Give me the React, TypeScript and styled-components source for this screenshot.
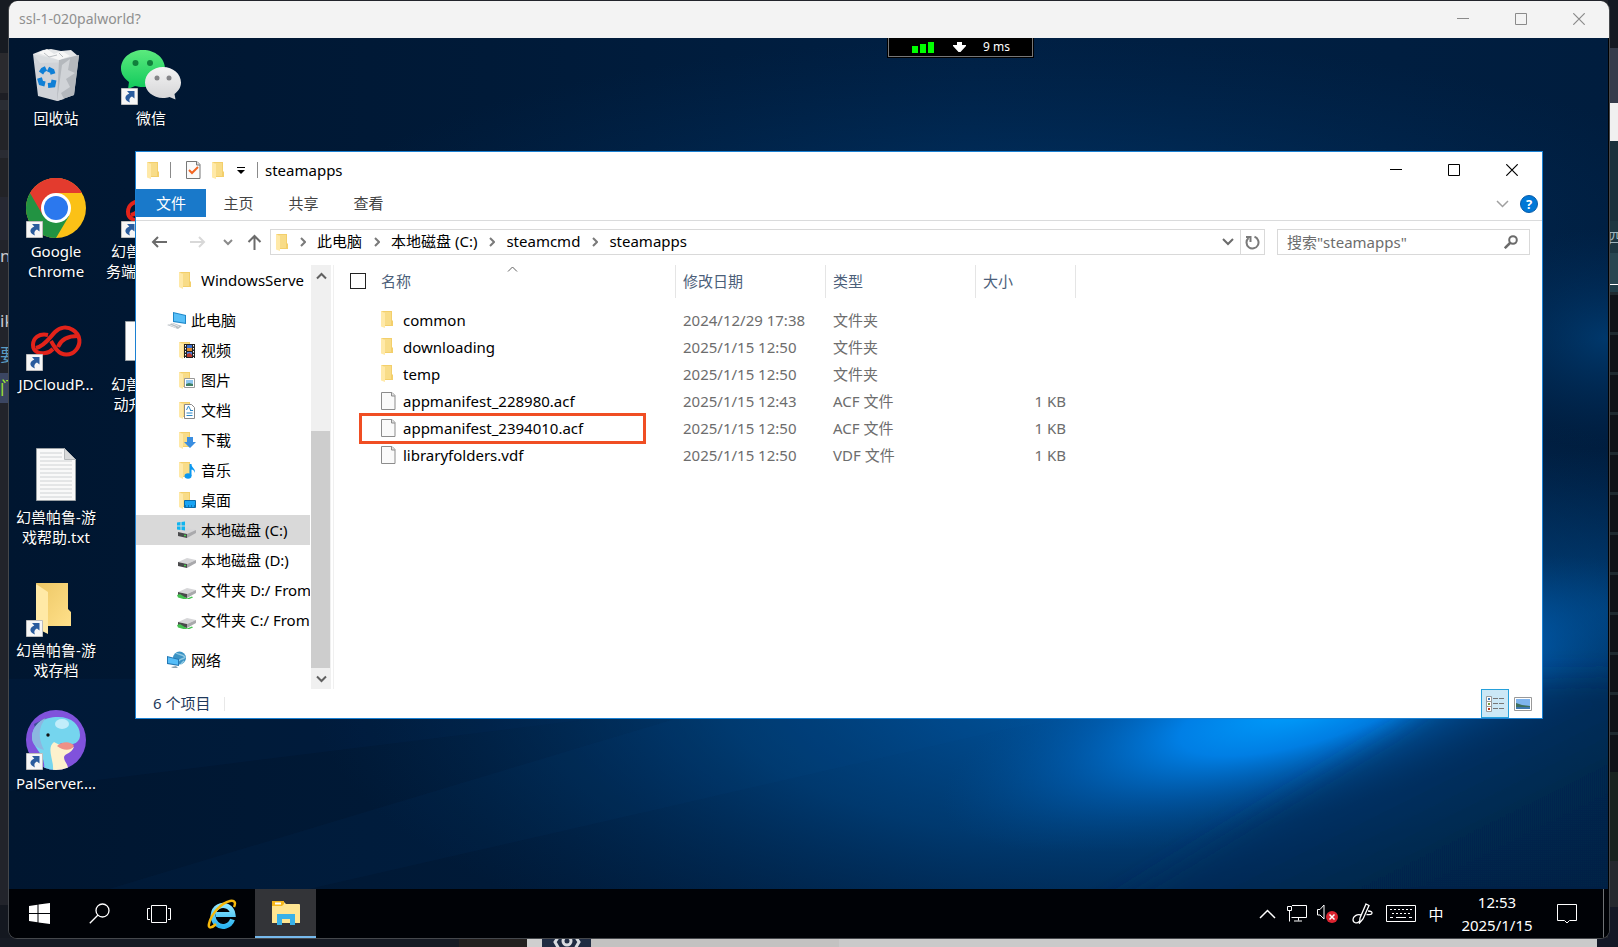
import React from "react";
import styled, { createGlobalStyle, css } from "styled-components";

const GlobalStyle = createGlobalStyle`
  * { box-sizing: border-box; }
  html, body { margin: 0; padding: 0; }
  body {
    font-family: "Noto Sans", "Noto Sans CJK SC", sans-serif;
    font-size: 15px;
    line-height: 20px;
    background: #22242b;
    overflow: hidden;
  }
  button, input { font: inherit; color: inherit; padding: 0; margin: 0; border: 0; background: none; }
  a { color: inherit; text-decoration: none; }
  svg { display: block; flex: none; }
`;

/* ---------- page and what shows behind the remote window ---------- */

const Page = styled.div`
  position: relative;
  display: flex;
  flex-direction: column;
  height: 100vh;
  padding: 0 8px 8px 8px;
  overflow: hidden;
`;

const Backdrop = styled.div`
  position: absolute;
  inset: 0;
  display: flex;
  flex-direction: column;
  background: #22242b;
`;

const BackdropSides = styled.div`
  flex: 1;
  min-height: 0;
  display: flex;
  justify-content: space-between;
`;

const Side = styled.div`
  width: 18px;
  display: flex;
  flex-direction: column;
  overflow: hidden;
`;

const Band = styled.div<{ $h?: number; $c: string; $fg?: string; $size?: number }>`
  flex: ${(p) => (p.$h ? `0 0 ${p.$h}px` : "1")};
  height: ${(p) => p.$h}px;
  line-height: ${(p) => p.$h}px;
  background: ${(p) => p.$c};
  color: ${(p) => p.$fg};
  font-size: ${(p) => p.$size ?? 17}px;
  white-space: nowrap;
  overflow: hidden;
`;

const RightSide = styled(Side)`
  width: 10px;
`;

const ServerRow = styled.div`
  flex: 0 0 40px;
  background: #0e1217;
  border-top: 3px solid #1e2a2f;
`;

const BackdropFoot = styled.div`
  display: flex;
  height: 9px;
  overflow: hidden;
`;

const FootPart = styled.div<{ $w?: number; $c: string }>`
  flex: ${(p) => (p.$w ? `0 0 ${p.$w}px` : "1")};
  background: ${(p) => p.$c};
  display: flex;
  justify-content: center;
`;

/* ---------- remote desktop window ---------- */

const Remote = styled.div`
  position: relative;
  flex: 1;
  min-height: 0;
  display: flex;
  flex-direction: column;
  margin-top: 1px;
  border: solid #45484c;
  border-width: 0 1px 1px 1px;
  border-radius: 9px;
  overflow: hidden;
  background: #000;
`;

const RemoteTitle = styled.header`
  display: flex;
  align-items: center;
  height: 37px;
  flex: none;
  padding: 0 1px 1px 10px;
  background: #f3f3f3;
  color: #8f8f8f;
`;

const RemoteName = styled.span`
  flex: 1;
  font-size: 14px;
`;

const Caption = styled.button`
  width: 58px;
  height: 35px;
  display: flex;
  align-items: center;
  justify-content: center;
`;

const Desktop = styled.main`
  position: relative;
  flex: 1;
  min-height: 0;
  margin-right: 1px;
  overflow: hidden;
`;

const Wallpaper = styled.svg`
  position: absolute;
  inset: 0;
  width: 100%;
  height: 100%;
`;

const Shortcuts = styled.div`
  position: absolute;
  top: 7px;
  left: 0;
  display: grid;
  grid-auto-flow: column;
  grid-template-rows: repeat(6, 133px);
  grid-auto-columns: 94px;
  column-gap: 1px;
`;

const Shortcut = styled.a`
  display: flex;
  flex-direction: column;
  align-items: center;
  gap: 3px;
  color: #fff;
  text-align: center;
  white-space: nowrap;
  text-shadow: 0 1px 2px rgba(0, 0, 0, 0.7);
`;

const ShortcutIcon = styled.span`
  position: relative;
  width: 60px;
  height: 60px;
`;

const ArrowBadge = styled.svg`
  position: absolute;
  left: 0;
  bottom: 0;
`;

const Line = styled.span`
  display: block;
`;

const Latency = styled.div`
  position: absolute;
  top: 0;
  right: 574px;
  width: 147px;
  height: 20px;
  display: flex;
  align-items: center;
  justify-content: space-between;
  padding: 0 23px 2px 23px;
  border: 1px solid #000;
  border-top: 0;
  background: #000;
  box-shadow: inset 1px 0 #777, inset -1px -1px #777;
  color: #fff;
  font-size: 12px;
  line-height: 16px;
`;

/* ---------- file explorer ---------- */

const Explorer = styled.section`
  position: absolute;
  top: 113px;
  left: 126px;
  right: 65px;
  border: 1px solid #1a80d2;
  background: #fff;
  color: #000;
`;

const Bar = styled.div<{ $h: number }>`
  display: flex;
  align-items: center;
  height: ${(p) => p.$h}px;
`;

const TitleRow = styled(Bar)`
  padding: 0 1px 1px 11px;
`;

const Divider = styled.i<{ $h: number; $c: string }>`
  width: 1px;
  height: ${(p) => p.$h}px;
  background: ${(p) => p.$c};
`;

const QuickAccess = styled.div`
  display: flex;
  align-items: center;
  gap: 11px;
  margin: 0 13px 0 15px;
`;

const Title = styled.h1`
  flex: 1;
  margin: 0 0 0 7px;
  font-size: 15px;
  font-weight: 400;
  line-height: 20px;
`;

const QuickDivider = styled(Divider)`
  margin: 0 4px 0 -4px;
`;

const TitleDivider = styled(Divider)`
  margin-left: 12px;
`;

const Ribbon = styled(Bar)`
  align-items: flex-start;
  border-bottom: 1px solid #dadbdc;
`;

const RibbonTab = styled.button<{ $file?: boolean }>`
  width: ${(p) => (p.$file ? 70 : 65)}px;
  height: 28px;
  color: #444;
  ${(p) =>
    p.$file &&
    css`
      background: #1979ca;
      color: #fff;
    `}
`;

const RibbonEnd = styled.div`
  display: flex;
  align-items: center;
  gap: 11px;
  height: 28px;
  margin: 1px 4px 0 auto;
`;

const Help = styled.button`
  width: 18px;
  height: 18px;
  border: 1px solid #0a5ca8;
  border-radius: 50%;
  background: #0078d7;
  color: #fff;
  font-size: 13px;
  font-weight: 700;
  line-height: 16px;
`;

const AddressRow = styled(Bar)`
  padding: 0 12px 2px 15px;
`;

const NavButtons = styled.div`
  display: flex;
  align-items: center;
  width: 119px;
`;

const NavButton = styled.button<{ $ml?: number }>`
  margin-left: ${(p) => p.$ml ?? 0}px;
`;

const Address = styled.div`
  display: flex;
  align-items: center;
  flex: 1;
  height: 26px;
  margin-right: 12px;
  padding-left: 5px;
  border: 1px solid #d9d9d9;
`;

const Crumbs = styled.nav`
  display: flex;
  align-items: center;
  flex: 1;
`;

const Crumb = styled.a`
  line-height: 22px;
  padding-bottom: 2px;
`;

const CrumbArrow = styled.span`
  width: 29px;
  display: flex;
  justify-content: center;
`;

const AddressButton = styled.button<{ $line?: boolean }>`
  width: 24px;
  height: 24px;
  display: flex;
  align-items: center;
  justify-content: center;
  border-left: ${(p) => (p.$line ? "1px solid #d9d9d9" : "0")};
`;

const Search = styled.label`
  display: flex;
  align-items: center;
  width: 253px;
  height: 26px;
  padding: 0 11px 0 9px;
  border: 1px solid #d9d9d9;
  input {
    flex: 1;
    min-width: 0;
    height: 24px;
    outline: 0;
  }
  input::placeholder { color: #6d6d6d; opacity: 1; }
`;

const Body = styled.div`
  display: flex;
  height: 424px;
`;

const Tree = styled.nav`
  width: 174px;
  display: flex;
  flex-direction: column;
  overflow: hidden;
`;

const TreeItem = styled.a<{ $root?: boolean; $on?: boolean; $gap?: boolean }>`
  display: flex;
  align-items: center;
  flex: none;
  gap: 4px;
  height: 30px;
  margin-top: ${(p) => (p.$gap ? 10 : 0)}px;
  padding-left: ${(p) => (p.$root ? 31 : 41)}px;
  background: ${(p) => (p.$on ? "#d9d9d9" : "transparent")};
  white-space: nowrap;
`;

const Scroll = styled.div`
  display: flex;
  flex-direction: column;
  width: 20px;
  margin: 0 2px 0 1px;
  background: #f0f0f0;
`;

const ScrollEnd = styled.button`
  height: 21px;
  display: flex;
  align-items: center;
  justify-content: center;
`;

const ScrollTrack = styled.div`
  flex: 1;
  display: flex;
  flex-direction: column;
  justify-content: flex-end;
`;

const Thumb = styled.div`
  height: 62%;
  margin-right: 1px;
  background: #cdcdcd;
`;

const Files = styled.div`
  flex: 1;
  border-left: 1px solid #f0f0f0;
`;

const Table = styled.table`
  width: 742px;
  table-layout: fixed;
  border-collapse: collapse;
`;

const Th = styled.th<{ $w: number }>`
  position: relative;
  width: ${(p) => p.$w}px;
  height: 42px;
  padding: 0;
  color: #4c607a;
  font-weight: 400;
  text-align: left;
  vertical-align: top;
`;

const HeadCell = styled.div`
  display: flex;
  align-items: center;
  gap: 15px;
  height: 33px;
  padding: 0 0 2px 7px;
  border-right: 1px solid #e5e5e5;
`;

const NameHead = styled(HeadCell)`
  padding-left: 16px;
`;

const Check = styled.input`
  appearance: none;
  width: 16px;
  height: 16px;
  border: 1px solid #222;
  background: #fff;
`;

const SortMark = styled.svg`
  position: absolute;
  top: 1px;
  left: 173px;
`;

const Td = styled.td<{ $right?: boolean }>`
  position: relative;
  height: 27px;
  padding: 0 10px 2px 7px;
  color: #6d6d6d;
  text-align: ${(p) => (p.$right ? "right" : "left")};
  white-space: nowrap;
`;

const NameTd = styled(Td)`
  padding-left: 47px;
  color: #000;
`;

const FileName = styled.span`
  display: flex;
  align-items: center;
`;

const FileIcon = styled.span`
  width: 22px;
`;

const Highlight = styled.span`
  position: absolute;
  top: -2px;
  left: 25px;
  width: 287px;
  height: 31px;
  border: 3px solid #f04e23;
`;

const Status = styled(Bar)`
  padding-left: 17px;
  color: #1e395b;
`;

const StatusText = styled.span`
  padding: 0 14px 2px 0;
`;

const Views = styled.div`
  display: flex;
  margin: 0 5px 0 auto;
`;

const ViewButton = styled.button<{ $on?: boolean }>`
  width: 28px;
  height: 29px;
  display: flex;
  align-items: center;
  justify-content: center;
  border: ${(p) => (p.$on ? "1px solid #26a0da" : "0")};
  background: ${(p) => (p.$on ? "#cbe8f6" : "transparent")};
`;

/* ---------- taskbar ---------- */

const Taskbar = styled.footer`
  display: flex;
  align-items: center;
  flex: none;
  height: 49px;
  background: #000206;
  color: #fff;
`;

const TaskButton = styled.button<{ $on?: boolean; $w?: number }>`
  width: ${(p) => p.$w ?? 60}px;
  height: 49px;
  display: flex;
  align-items: center;
  justify-content: center;
  ${(p) =>
    p.$on &&
    css`
      background: #333438;
      border-bottom: 2px solid #76b9ed;
    `}
`;

const Tray = styled.div`
  display: flex;
  align-items: center;
  margin-left: auto;
  height: 49px;
`;

const TrayButton = styled.button<{ $w: number }>`
  width: ${(p) => p.$w}px;
  height: 49px;
  display: flex;
  align-items: center;
  justify-content: center;
`;

const Clock = styled.time`
  width: 88px;
  text-align: center;
  line-height: 23px;
`;

const ShowDesktop = styled.button`
  width: 6px;
  height: 49px;
  margin-left: 10px;
  border-left: 1px solid #6f7275;
`;

/* ---------- drawings ---------- */

const Folder = () => (
  <svg width="12" height="17" viewBox="0 0 12 17">
    <path d="M0 0h11v9l1 1v5H3z" fill="#f3cf6b" />
    <path d="M3 1h7v13H3z" fill="#f8dc88" />
    <path d="M0 0l4 2v15L0 15.500z" fill="#ffe9a8" />
  </svg>
);

const Doc = () => (
  <svg width="15" height="18" viewBox="0 0 15 18">
    <path d="M.5.500h10.500l3 3v14H.5z" fill="#fafafa" stroke="#8c8c8c" />
    <path d="M10.500.500v3.500h3.500" fill="#e0e0e0" stroke="#8c8c8c" />
  </svg>
);

const CheckDoc = () => (
  <svg width="15" height="18" viewBox="0 0 15 18">
    <path d="M.5.500h10.500l3 3v14H.5z" fill="#fafafa" stroke="#777" />
    <path d="M10.500.500v3.500h3.500" fill="#ddd" stroke="#777" />
    <path d="M3 9l3 3 6-6" fill="none" stroke="#f26522" strokeWidth="2" />
  </svg>
);

const TreeFolder = ({ kind }: { kind?: string }) => (
  <svg width="20" height="18" viewBox="0 0 20 18">
    <g transform="translate(2 0)">
      <path d="M0 1h11v9l1 1v5H3z" fill="#f3cf6b" />
      <path d="M3 2h7v13H3z" fill="#f8dc88" />
      <path d="M0 1l4 2v15L0 16z" fill="#ffe9a8" />
    </g>
    {kind === "video" && (
      <g>
        <path d="M7 3h11v14H7z" fill="#222" />
        <path d="M10 4h5v6h-5z" fill="#3a6fd0" />
        <path d="M10 7h5v3h-5z" fill="#e08a2c" />
        <path d="M10 11h5v5h-5z" fill="#4a7fe0" />
        <path d="M10 13l3-1 2 2v2h-5z" fill="#b83a2e" />
        <path d="M8.500 4v13M16.500 4v13" stroke="#fff" strokeDasharray="1.500 1.500" />
      </g>
    )}
    {kind === "picture" && (
      <g>
        <path d="M7.500 7.500h10v9h-10z" fill="#fff" stroke="#999" />
        <path d="M9 9h7v6H9z" fill="#8fc7f0" />
        <path d="M9 13l3-1 4 1v2H9z" fill="#3f7f63" />
      </g>
    )}
    {kind === "document" && (
      <g>
        <path d="M7.500 3.500h7l3 3v11h-10z" fill="#fff" stroke="#888" />
        <path d="M9.500 9l2-4 2 4M13 9.500h3M9.500 12h6M9.500 14.500h6" fill="none" stroke="#2b88c8" />
      </g>
    )}
    {kind === "download" && <path d="M10 6h6v5h3l-6 6-6-6h3z" fill="#3a8ee0" />}
    {kind === "music" && (
      <g fill="#0c98f0">
        <ellipse cx="11" cy="15" rx="3.500" ry="2.700" />
        <path d="M12.500 3h2c0 4 4 4 3.500 9-1-3-2-3-3.500-3.500V15h-2z" />
      </g>
    )}
    {kind === "desktop" && (
      <g>
        <path d="M7.500 9.500h11v7h-11z" fill="#18a4f4" stroke="#0d6ba8" />
        <path d="M8 15h10" stroke="#074a7a" strokeDasharray="1 2" />
      </g>
    )}
  </svg>
);

const Drive = ({ kind }: { kind?: string }) => (
  <svg width="20" height="18" viewBox="0 0 20 18">
    <path d="M1 11l9-4 9 2-9 4z" fill="#d6d6d8" />
    <path d="M1 11l9 2v4l-9-2z" fill="#4a4a4c" />
    <path d="M10 13l9-4v3l-9 5z" fill="#a9a9ac" />
    {kind !== "net" && <path d="M7 14.500h2" stroke="#45d04a" strokeWidth="1.500" />}
    {kind === "win" && (
      <path d="M0 1.500l3.500-.5v3.500H0zM4.500 1L8 .500v4H4.500zM0 5.500h3.500V9L0 8.500zM4.500 5.500H8v4L4.500 9z" fill="#10b4ef" />
    )}
    {kind === "net" && <path d="M0 14l3-1 7 4.500 5-2 1 1-6 2.500-9-2.500z" fill="#43c24f" />}
  </svg>
);

const Computer = () => (
  <svg width="20" height="18" viewBox="0 0 20 18">
    <path d="M6 1l13 3v9L6 11z" fill="#1e87c8" />
    <path d="M7 2.300l11 2.500v7L7 10z" fill="#57bff8" />
    <path d="M0 14l6-2 9 3-4 3z" fill="#b9bfc4" />
    <path d="M2 13.500l7 3M5 12.500l7 3" stroke="#e8eaec" />
  </svg>
);

const Network = () => (
  <svg width="20" height="18" viewBox="0 0 20 18">
    <circle cx="12.500" cy="7" r="6.500" fill="#3b93c4" />
    <path d="M9 2c3 2 7 1 9 4-2 3-5 1-6 4M14 13l3-3" fill="none" stroke="#8fc8e2" strokeWidth="1.500" />
    <path d="M0 5l12 3v7L0 13z" fill="#2478b4" />
    <path d="M1 6.300l10 2.500v5L1 12z" fill="#55bdf8" />
    <path d="M4 16l5-1 2 2H6z" fill="#8aa0ae" />
  </svg>
);

const Chevron = ({ d, w, h, c, s = 2 }: { d: string; w: number; h: number; c: string; s?: number }) => (
  <svg width={w} height={h} viewBox={`0 0 ${w} ${h}`} fill="none" stroke={c} strokeWidth={s}>
    <path d={d} />
  </svg>
);

const CaptionIcon = ({ kind, c }: { kind: string; c: string }) => (
  <svg width="12" height="12" viewBox="0 0 12 12" fill="none" stroke={c}>
    {kind === "min" && <path d="M0 5.500h12" />}
    {kind === "max" && <path d="M.5.500h11v11H.5z" />}
    {kind === "close" && <path d="M.3.300l11.400 11.400M11.700.300L.3 11.700" strokeWidth="1.200" />}
  </svg>
);

const Captions = ({ c }: { c: string }) => (
  <>
    <Caption aria-label="最小化"><CaptionIcon kind="min" c={c} /></Caption>
    <Caption aria-label="最大化"><CaptionIcon kind="max" c={c} /></Caption>
    <Caption aria-label="关闭"><CaptionIcon kind="close" c={c} /></Caption>
  </>
);

const Badge = () => (
  <ArrowBadge width="17" height="17" viewBox="0 0 17 17">
    <path d="M.5.500h16v16H.5z" fill="#f6f6f6" stroke="#bdbdbd" />
    <path d="M6 3h7.500v7.500L11 8.500C8 10 8 12 9 14.500 3 12 3 8 8.300 5.500z" fill="#2a5c9e" />
  </ArrowBadge>
);

const BigIcon = ({ kind }: { kind: string }) => (
  <svg width="60" height="60" viewBox="0 0 60 60">
    {kind === "bin" && (
      <g>
        <path d="M7 9l10-4 8-1 10 2 10-1 7 6-4 6-34 1z" fill="#e4e6e8" />
        <path d="M7 9l26 6 20-5-5 40-17 6-19-5z" fill="#d9dcdf" opacity=".96" />
        <path d="M33 15l20-5-5 40-17 6z" fill="#b4b8bd" />
        <path d="M36 20l8-6-2 11 7 3-9 6 4 8-9 6 3 6-7 2z" fill="#d0d3d7" />
        <path d="M12 8l9-4 7 5 8-3 8 5-11 4z" fill="#f7f7f7" />
        <path d="M18 8l5 4 8-2M33 8l4 4" fill="none" stroke="#babec2" />
        <g fill="none" stroke="#0f7fd6" strokeWidth="5">
          <path d="M15 28l2-3 3-1.500" />
          <path d="M22 24l4 2 1 3" />
          <path d="M28 35l-1 5-5 .5" />
          <path d="M19 39l-4-1-1.500-5" />
        </g>
      </g>
    )}
    {kind === "wechat" && (
      <g>
        <defs>
          <linearGradient id="wc" x1="0" y1="0" x2="0" y2="1">
            <stop offset="0" stopColor="#5bea7d" />
            <stop offset="1" stopColor="#10c95c" />
          </linearGradient>
          <linearGradient id="wg" x1="0" y1="0" x2="0" y2="1">
            <stop offset="0" stopColor="#f4f4f4" />
            <stop offset="1" stopColor="#d4d4d6" />
          </linearGradient>
        </defs>
        <path d="M22 5c12 0 22 8 22 18.500S34 42 22 42c-3 0-6-.5-8-1l-7 3 1-7C3 33 0 29 0 23.500 0 13 10 5 22 5z" fill="url(#wc)" />
        <circle cx="14.500" cy="18" r="3" fill="#11803c" />
        <circle cx="29" cy="18" r="3" fill="#11803c" />
        <path d="M42 22c10 0 18 7 18 15.500 0 5-3 9-6.500 11.500l1 5.500-6-2.500c-2 .6-4 1-6.500 1-10 0-18-7-18-15.500S32 22 42 22z" fill="url(#wg)" />
        <circle cx="36" cy="33" r="2.500" fill="#858588" />
        <circle cx="48" cy="33" r="2.500" fill="#858588" />
      </g>
    )}
    {kind === "chrome" && (
      <g>
        <circle cx="30" cy="30" r="30" fill="#fbc116" />
        <path d="M30 30L4 15a30 30 0 0 0 26 45l13-22z" fill="#229342" />
        <path d="M30 15h26L43 38z" fill="#fbc116" />
        <path d="M4 15A30 30 0 0 1 56 15H30L17 37.500z" fill="#e33b2e" />
        <circle cx="30" cy="30" r="15" fill="#fff" />
        <circle cx="30" cy="30" r="12" fill="#2b78ee" />
      </g>
    )}
    {kind === "jd" && (
      <g fill="none" stroke="#e2231a" strokeWidth="4">
        <path d="M22 24C13 22 7 27 7 34c0 6 5 9 12 8 3 0 6-2 8-4" />
        <path d="M10 37c9-2 14-11 19-16 5-5 12-6 18-2 8 5 8 14 3 20-5 6-14 6-19 0-3-3-4-6-6-9" />
        <path d="M52 25c-10 0-17 3-20 11" />
      </g>
    )}
    {kind === "text" && (
      <g>
        <path d="M10.500 4.500h28l11 11v41h-39z" fill="#f9f9f9" stroke="#9aa0a4" />
        <path d="M38.500 4.500v11h11z" fill="#d9dadb" stroke="#b5b8ba" />
        <path d="M14 9h22M14 13h22M14 17h32M14 21h32M14 25h32M14 29h32M14 33h32M14 37h32M14 41h32M14 45h32M14 49h32M14 53h32" stroke="#cfd2d4" />
      </g>
    )}
    {kind === "page" && <path d="M4.500 10.500h50v39h-50z" fill="#fdfdfd" stroke="#9aa0a4" />}
    {kind === "folder" && (
      <g>
        <defs>
          <linearGradient id="fd" x1="0" y1="0" x2="1" y2="1">
            <stop offset="0" stopColor="#edc765" />
            <stop offset="1" stopColor="#ffe08a" />
          </linearGradient>
        </defs>
        <path d="M10 6h32v26l3 3v14H16z" fill="url(#fd)" />
        <path d="M10 7l12 8v42l-12-6z" fill="#ffe9a6" />
      </g>
    )}
    {kind === "pal" && (
      <g>
        <clipPath id="pc"><circle cx="30" cy="30" r="30" /></clipPath>
        <g clipPath="url(#pc)">
          <path d="M0 0h60v60H0z" fill="#8052dc" />
          <path d="M8 14l8 30 4 16h12L20 8z" fill="#3c4f94" />
          <path d="M6 28C6 14 18 7 32 7c14 0 22 8 22 18 0 5-3 8-7 9l-12-1-7 9 2 18H18C20 44 8 40 6 28z" fill="#75d5ee" />
          <path d="M6 28C6 18 12 11 20 8c-8 9-8 20-2 32C11 38 6 34 6 28z" fill="#8cb6e0" />
          <path d="M27 60c1-10-7-22 1-28 8 4 14 7 20 5-3 7-9 6-10 10 0 5 5 8 4 13z" fill="#fdf1cd" />
          <path d="M31 36c4-4 13-6 17 0-4 6-12 4-17 0z" fill="#f09086" />
          <ellipse cx="36" cy="14" rx="7" ry="5" fill="#c1edfa" />
          <circle cx="22" cy="25" r="1.700" fill="#111" />
        </g>
      </g>
    )}
  </svg>
);

const WindowsLogo = () => (
  <svg width="21" height="21" viewBox="0 0 21 21" fill="#fff">
    <path d="M0 3l8.500-1.200V10H0zM9.500 1.600L21 0v10H9.500zM0 11h8.500v8.200L0 18zM9.500 11H21v10L9.500 19.400z" />
  </svg>
);

const IeLogo = () => (
  <svg width="30" height="30" viewBox="0 0 30 30" fill="none">
    <defs>
      <linearGradient id="ie" x1="0" y1="0" x2="0" y2="1">
        <stop offset="0" stopColor="#8fe6ff" />
        <stop offset="1" stopColor="#2bb4f0" />
      </linearGradient>
    </defs>
    <path d="M25.500 20.500A10 10.500 0 1 1 26 15.500H9" stroke="url(#ie)" strokeWidth="5" />
    <path d="M9 25c-4 4-8 5-7 0C4 15 14 4 23 2c5-1 6 2 4 6" stroke="#f7b90b" strokeWidth="2.500" />
  </svg>
);

const ExplorerLogo = () => (
  <svg width="28" height="24" viewBox="0 0 28 24">
    <path d="M0 1h12l2 2h13a1 1 0 0 1 1 1v18H0z" fill="#ffe591" />
    <path d="M0 0h12v3l-2 2H0z" fill="#f6b81c" />
    <path d="M3 1.500h6v2H3z" fill="#fff" />
    <path d="M5 13h18v11h-5v-6h-8v6H5z" fill="#38b1e8" />
  </svg>
);

const WallpaperArt = () => (
  <Wallpaper viewBox="0 0 1600 850" preserveAspectRatio="none" aria-hidden>
    <defs>
      <linearGradient id="base" x1="0" y1="0" x2="1" y2="0">
        <stop offset="0" stopColor="#001630" />
        <stop offset=".3" stopColor="#001a38" />
        <stop offset=".6" stopColor="#002044" />
        <stop offset="1" stopColor="#001d3e" />
      </linearGradient>
      <radialGradient id="upper">
        <stop offset="0" stopColor="#004a8c" stopOpacity=".5" />
        <stop offset="1" stopColor="#003468" stopOpacity="0" />
      </radialGradient>
      <radialGradient id="lower">
        <stop offset="0" stopColor="#0062b8" stopOpacity=".85" />
        <stop offset=".5" stopColor="#004a8c" stopOpacity=".6" />
        <stop offset="1" stopColor="#003060" stopOpacity="0" />
      </radialGradient>
      <radialGradient id="glow">
        <stop offset="0" stopColor="#00a2ff" />
        <stop offset=".35" stopColor="#0088f4" stopOpacity=".85" />
        <stop offset=".65" stopColor="#0068c4" stopOpacity=".45" />
        <stop offset="1" stopColor="#004c90" stopOpacity="0" />
      </radialGradient>
      <radialGradient id="side">
        <stop offset="0" stopColor="#004a8a" stopOpacity=".6" />
        <stop offset="1" stopColor="#003468" stopOpacity="0" />
      </radialGradient>
      <linearGradient id="shade" gradientUnits="userSpaceOnUse" x1="1280" y1="730" x2="1340" y2="850">
        <stop offset="0" stopColor="#003264" stopOpacity=".35" />
        <stop offset=".5" stopColor="#002a54" stopOpacity=".6" />
        <stop offset="1" stopColor="#002246" stopOpacity=".6" />
      </linearGradient>
      <filter id="soft" x="-20%" y="-20%" width="140%" height="140%">
        <feGaussianBlur stdDeviation="12" />
      </filter>
    </defs>
    <path d="M0 0h1600v850H0z" fill="url(#base)" />
    <ellipse cx="1020" cy="190" rx="720" ry="190" fill="url(#upper)" />
    <ellipse cx="1600" cy="300" rx="170" ry="110" fill="url(#side)" />
    <ellipse cx="1600" cy="570" rx="230" ry="160" fill="url(#side)" />
    <ellipse cx="1120" cy="650" rx="820" ry="310" fill="url(#lower)" />
    <ellipse cx="1300" cy="665" rx="380" ry="110" fill="url(#glow)" transform="rotate(-16 1300 665)" />
    <path d="M1460 640L1390 690 1250 775 1080 880H1640V640z" fill="url(#shade)" filter="url(#soft)" />
    <path d="M0 752L600 678 800 640H0z" fill="#00356a" opacity=".12" />
    <path d="M300 850L1000 690 1300 640H800L100 850z" fill="#0060b0" opacity=".05" />
  </Wallpaper>
);

/* ---------- data ---------- */

const shortcuts = [
  { icon: "bin", lines: ["回收站"], badge: false },
  { icon: "chrome", lines: ["Google", "Chrome"], badge: true },
  { icon: "jd", lines: ["JDCloudP..."], badge: true },
  { icon: "text", lines: ["幻兽帕鲁-游", "戏帮助.txt"], badge: false },
  { icon: "folder", lines: ["幻兽帕鲁-游", "戏存档"], badge: true },
  { icon: "pal", lines: ["PalServer...."], badge: true },
  { icon: "wechat", lines: ["微信"], badge: true },
  { icon: "jd", lines: ["幻兽帕鲁-服", "务端启动程序"], badge: true },
  { icon: "page", lines: ["幻兽帕鲁-自", "动升级程序"], badge: false },
];

const tree = [
  { name: "WindowsServe", icon: <TreeFolder /> },
  { name: "此电脑", icon: <Computer />, root: true, gap: true },
  { name: "视频", icon: <TreeFolder kind="video" /> },
  { name: "图片", icon: <TreeFolder kind="picture" /> },
  { name: "文档", icon: <TreeFolder kind="document" /> },
  { name: "下载", icon: <TreeFolder kind="download" /> },
  { name: "音乐", icon: <TreeFolder kind="music" /> },
  { name: "桌面", icon: <TreeFolder kind="desktop" /> },
  { name: "本地磁盘 (C:)", icon: <Drive kind="win" />, on: true },
  { name: "本地磁盘 (D:)", icon: <Drive /> },
  { name: "文件夹 D:/ From", icon: <Drive kind="net" /> },
  { name: "文件夹 C:/ From", icon: <Drive kind="net" /> },
  { name: "网络", icon: <Network />, root: true, gap: true },
];

const files = [
  { name: "common", date: "2024/12/29 17:38", type: "文件夹", size: "" },
  { name: "downloading", date: "2025/1/15 12:50", type: "文件夹", size: "" },
  { name: "temp", date: "2025/1/15 12:50", type: "文件夹", size: "" },
  { name: "appmanifest_228980.acf", date: "2025/1/15 12:43", type: "ACF 文件", size: "1 KB" },
  { name: "appmanifest_2394010.acf", date: "2025/1/15 12:50", type: "ACF 文件", size: "1 KB", marked: true },
  { name: "libraryfolders.vdf", date: "2025/1/15 12:50", type: "VDF 文件", size: "1 KB" },
];

const crumbs = ["此电脑", "本地磁盘 (C:)", "steamcmd", "steamapps"];

export default function App() {
  return (
    <Page>
      <GlobalStyle />
      <Backdrop aria-hidden>
        <BackdropSides>
          <Side>
            <Band $h={53} $c="#171b22" />
            <Band $h={40} $c="#2a2a2e" />
            <Band $h={7} $c="#1d1e24" />
            <Band $h={10} $c="#2a2d34" />
            <Band $h={40} $c="#232428" />
            <Band $h={8} $c="#2a2c33" />
            <Band $h={39} $c="#222327" />
            <Band $h={43} $c="#262832" />
            <Band $h={32} $c="#22242b" $fg="#c8cad0">ns</Band>
            <Band $h={33} $c="#22242b" />
            <Band $h={32} $c="#22242b" $fg="#c8cad0">ik</Band>
            <Band $h={36} $c="#22242b" $fg="#5a9cc4">要</Band>
            <Band $h={30} $c="#3b4662" $fg="#a0e830">门</Band>
            <Band $h={502} $c="#22242b" />
            <Band $c="#141820" />
          </Side>
          <RightSide>
            <Band $h={48} $c="#141923" />
            <Band $h={55} $c="#343b4b" />
            <Band $h={38} $c="#f0f0f0" />
            <Band $h={80} $c="#1a303c" />
            <Band $h={32} $c="#1d3641" $fg="#9fb4bc" $size={15}>四</Band>
            <Band $h={31} $c="#284651" />
            <Band $h={1} $c="#fff" />
            <Band $h={7} $c="#1f3d48" />
            {Array.from({ length: 12 }, (_, i) => (
              <ServerRow key={i} />
            ))}
            <Band $h={89} $c="#18231f" />
            <Band $h={46} $c="#25282e" />
            <Band $c="#141826" />
          </RightSide>
        </BackdropSides>
        <BackdropFoot>
          <FootPart $w={459} $c="#171b24" />
          <FootPart $w={68} $c="#242120" />
          <FootPart $w={15} $c="#cfcfcf" />
          <FootPart $w={49} $c="#202c42">
            <svg width="28" height="9" viewBox="0 0 28 9" fill="none" stroke="#d8dbe0" strokeWidth="3">
              <path d="M6-2L2 4l4 7M22-2l4 6-4 7" />
              <circle cx="14" cy="3" r="4" />
            </svg>
          </FootPart>
          <FootPart $w={248} $c="#c3c2c1" />
          <FootPart $c="#cacaca" />
          <FootPart $w={21} $c="#141826" />
        </BackdropFoot>
      </Backdrop>

      <Remote>
        <RemoteTitle>
          <RemoteName>ssl-1-020palworld?</RemoteName>
          <Captions c="#8a8a8a" />
        </RemoteTitle>

        <Desktop>
          <WallpaperArt />
          <Shortcuts>
            {shortcuts.map((s, i) => (
              <Shortcut key={i} href="#">
                <ShortcutIcon>
                  <BigIcon kind={s.icon} />
                  {s.badge && <Badge />}
                </ShortcutIcon>
                <span>
                  {s.lines.map((l) => (
                    <Line key={l}>{l}</Line>
                  ))}
                </span>
              </Shortcut>
            ))}
          </Shortcuts>

          <Latency>
            <svg width="24" height="12" viewBox="0 0 24 12" fill="#00ff00">
              <path d="M1 5h6v7H1zM9 3h6v9H9zM17 1h6v11h-6z" />
            </svg>
            <svg width="13" height="10" viewBox="0 0 13 10" fill="#fff">
              <path d="M4 0h5v3h4v1L7.500 10h-2L0 4V3h4z" />
            </svg>
            <span>9 ms</span>
          </Latency>

          <Explorer>
            <TitleRow $h={37}>
              <Folder />
              <QuickAccess>
                <QuickDivider $h={16} $c="#8a8a8a" />
                <CheckDoc />
                <Folder />
              </QuickAccess>
              <svg width="8" height="7" viewBox="0 0 8 7">
                <path d="M0 .500h8" stroke="#000" />
                <path d="M0 3h8L4 7z" />
              </svg>
              <TitleDivider $h={16} $c="#8a8a8a" />
              <Title>steamapps</Title>
              <Captions c="#000" />
            </TitleRow>

            <Ribbon $h={32}>
              <RibbonTab $file>文件</RibbonTab>
              <RibbonTab>主页</RibbonTab>
              <RibbonTab>共享</RibbonTab>
              <RibbonTab>查看</RibbonTab>
              <RibbonEnd>
                <Chevron w={13} h={8} c="#a0a0a0" s={1.5} d="M1 1l5.500 5.500L12 1" />
                <Help>?</Help>
              </RibbonEnd>
            </Ribbon>

            <AddressRow $h={44}>
              <NavButtons>
                <NavButton aria-label="后退">
                  <Chevron w={16} h={12} c="#6b6b6b" d="M16 6H2M7 1L2 6l5 5" />
                </NavButton>
                <NavButton aria-label="前进" $ml={23}>
                  <Chevron w={16} h={12} c="#d8d8d8" d="M0 6h14M9 1l5 5-5 5" />
                </NavButton>
                <NavButton aria-label="最近浏览的位置" $ml={17}>
                  <Chevron w={10} h={7} c="#8a8a8a" d="M1 1l4 4 4-4" />
                </NavButton>
                <NavButton aria-label="上移" $ml={14}>
                  <Chevron w={15} h={16} c="#6b6b6b" d="M7.500 16V2M1.500 8l6-6 6 6" />
                </NavButton>
              </NavButtons>
              <Address>
                <Folder />
                <Crumbs>
                  {crumbs.map((c) => (
                    <React.Fragment key={c}>
                      <CrumbArrow>
                        <Chevron w={6} h={10} c="#7a7a7a" d="M1 1l4 4-4 4" />
                      </CrumbArrow>
                      <Crumb href="#">{c}</Crumb>
                    </React.Fragment>
                  ))}
                </Crumbs>
                <AddressButton aria-label="展开">
                  <Chevron w={12} h={8} c="#6b6b6b" d="M1 1l5 5 5-5" />
                </AddressButton>
                <AddressButton aria-label="刷新" $line>
                  <Chevron w={15} h={15} c="#7a7a7a" d="M9.500 1.800A6 6 0 1 1 3.500 3M1 2h4.500v5" />
                </AddressButton>
              </Address>
              <Search>
                <input type="text" aria-label="搜索" placeholder={'搜索"steamapps"'} />
                <svg width="14" height="14" viewBox="0 0 14 14" fill="none" stroke="#6b6b6b" strokeWidth="2">
                  <circle cx="9" cy="5" r="3.800" />
                  <path d="M6.500 7.500L.8 13.200" strokeWidth="2.500" />
                </svg>
              </Search>
            </AddressRow>

            <Body>
              <Tree>
                {tree.map((t) => (
                  <TreeItem key={t.name} href="#" $root={t.root} $on={t.on} $gap={t.gap}>
                    {t.icon}
                    {t.name}
                  </TreeItem>
                ))}
              </Tree>
              <Scroll>
                <ScrollEnd aria-label="向上滚动">
                  <Chevron w={11} h={8} c="#606060" d="M1 6.500l4.500-4.500L10 6.500" />
                </ScrollEnd>
                <ScrollTrack>
                  <Thumb />
                </ScrollTrack>
                <ScrollEnd aria-label="向下滚动">
                  <Chevron w={11} h={8} c="#606060" d="M1 1.500L5.500 6 10 1.500" />
                </ScrollEnd>
              </Scroll>
              <Files>
                <Table>
                  <thead>
                    <tr>
                      <Th $w={342}>
                        <NameHead>
                          <Check type="checkbox" aria-label="全选" />
                          名称
                        </NameHead>
                        <SortMark width="11" height="6" viewBox="0 0 11 6" fill="none" stroke="#606060">
                          <path d="M1 5.500L5.500 1 10 5.500" />
                        </SortMark>
                      </Th>
                      <Th $w={150}><HeadCell>修改日期</HeadCell></Th>
                      <Th $w={150}><HeadCell>类型</HeadCell></Th>
                      <Th $w={100}><HeadCell>大小</HeadCell></Th>
                    </tr>
                  </thead>
                  <tbody>
                    {files.map((f) => (
                      <tr key={f.name}>
                        <NameTd>
                          {f.marked && <Highlight />}
                          <FileName>
                            <FileIcon>{f.size ? <Doc /> : <Folder />}</FileIcon>
                            {f.name}
                          </FileName>
                        </NameTd>
                        <Td>{f.date}</Td>
                        <Td>{f.type}</Td>
                        <Td $right>{f.size}</Td>
                      </tr>
                    ))}
                  </tbody>
                </Table>
              </Files>
            </Body>

            <Status $h={29}>
              <StatusText>6 个项目</StatusText>
              <Divider $h={14} $c="#e8e8e8" />
              <Views>
                <ViewButton $on aria-label="详细信息">
                  <svg width="18" height="16" viewBox="0 0 18 16" fill="none">
                    <path d="M.5.500h5v5h-5zM.5 5.500h5v5h-5zM.5 10.500h5v5h-5z" fill="#fff" stroke="#999" />
                    <path d="M2 3h2" stroke="#3a7ab8" strokeWidth="2" />
                    <path d="M2 8h2" stroke="#7a9a3a" strokeWidth="2" />
                    <path d="M2 13h2" stroke="#b83a1e" strokeWidth="2" />
                    <path d="M7 2.500h5M13 2.500h5M7 7.500h5M13 7.500h5M7 12.500h5M13 12.500h5" stroke="#777" />
                  </svg>
                </ViewButton>
                <ViewButton aria-label="大缩略图">
                  <svg width="18" height="14" viewBox="0 0 18 14">
                    <path d="M.5.500h17v13H.5z" fill="#fff" stroke="#999" />
                    <path d="M2 2h14v10H2z" fill="#7fb4ee" />
                    <path d="M2 6l6 2 8 1v3H2z" fill="#3f6f5c" />
                    <path d="M2 10h14v2H2z" fill="#3f78b0" />
                  </svg>
                </ViewButton>
              </Views>
            </Status>
          </Explorer>
        </Desktop>

        <Taskbar>
          <TaskButton aria-label="开始"><WindowsLogo /></TaskButton>
          <TaskButton aria-label="搜索">
            <svg width="21" height="21" viewBox="0 0 21 21" fill="none" stroke="#fff" strokeWidth="1.300">
              <circle cx="13.500" cy="7.500" r="6.500" />
              <path d="M9 12L.8 20.300" />
            </svg>
          </TaskButton>
          <TaskButton aria-label="任务视图">
            <svg width="24" height="18" viewBox="0 0 24 18" fill="none" stroke="#fff">
              <path d="M4.500.500h15v17h-15zM3 3.500H.5v11H3M21 3.500h2.500v11H21" />
            </svg>
          </TaskButton>
          <TaskButton aria-label="Internet Explorer" $w={66}><IeLogo /></TaskButton>
          <TaskButton aria-label="文件资源管理器" $on $w={61}><ExplorerLogo /></TaskButton>
          <Tray>
            <TrayButton $w={28} aria-label="显示隐藏的图标">
              <Chevron w={17} h={10} c="#fff" s={1.500} d="M1 9l7.500-7.500L16 9" />
            </TrayButton>
            <TrayButton $w={32} aria-label="网络">
              <svg width="20" height="17" viewBox="0 0 20 17" fill="none" stroke="#fff">
                <path d="M5 .500h14.500v12H4.500M.5 1.500h4v4h-4zM2.500 5.500v11M11.500 12.500v3M7 16h8" />
              </svg>
            </TrayButton>
            <TrayButton $w={28} aria-label="音量">
              <svg width="21" height="19" viewBox="0 0 21 19" fill="none">
                <path d="M.5 5.500h2.500l4-4.500v14l-4-4H.5z" stroke="#fff" />
                <circle cx="15" cy="13" r="6" fill="#dc2430" />
                <path d="M12.500 10.500l5 5M17.500 10.500l-5 5" stroke="#fff" strokeWidth="1.500" />
              </svg>
            </TrayButton>
            <TrayButton $w={42} aria-label="触控笔">
              <svg width="21" height="21" viewBox="0 0 21 21" fill="none" stroke="#fff" strokeWidth="1.300">
                <path d="M14 1l3 1.500L11 16l-3.500 4 .500-5z" />
                <path d="M16 8c3 0 5 1 3.500 3-1 1-3 .5-5 .5M9 12c-4-1-8 1-8 4.500C1 20 5 21 7 18.500" />
              </svg>
            </TrayButton>
            <TrayButton $w={36} aria-label="触摸键盘">
              <svg width="30" height="17" viewBox="0 0 30 17" fill="none" stroke="#fff">
                <path d="M.5.500h29v16H.5z" />
                <path d="M4 4.500h23M6 8.500h20" strokeDasharray="2 2" />
                <path d="M4 12.500h3M10 12.500h10M23 12.500h3" />
              </svg>
            </TrayButton>
            <TrayButton $w={34} aria-label="输入法">中</TrayButton>
            <Clock>
              12:53
              <br />
              2025/1/15
            </Clock>
            <TrayButton $w={52} aria-label="通知">
              <svg width="20" height="20" viewBox="0 0 20 20" fill="none" stroke="#fff">
                <path d="M.5.500h19v16H12.500L10 19l-2.500-2.500H.5z" />
              </svg>
            </TrayButton>
            <ShowDesktop aria-label="显示桌面" />
          </Tray>
        </Taskbar>
      </Remote>
    </Page>
  );
}
